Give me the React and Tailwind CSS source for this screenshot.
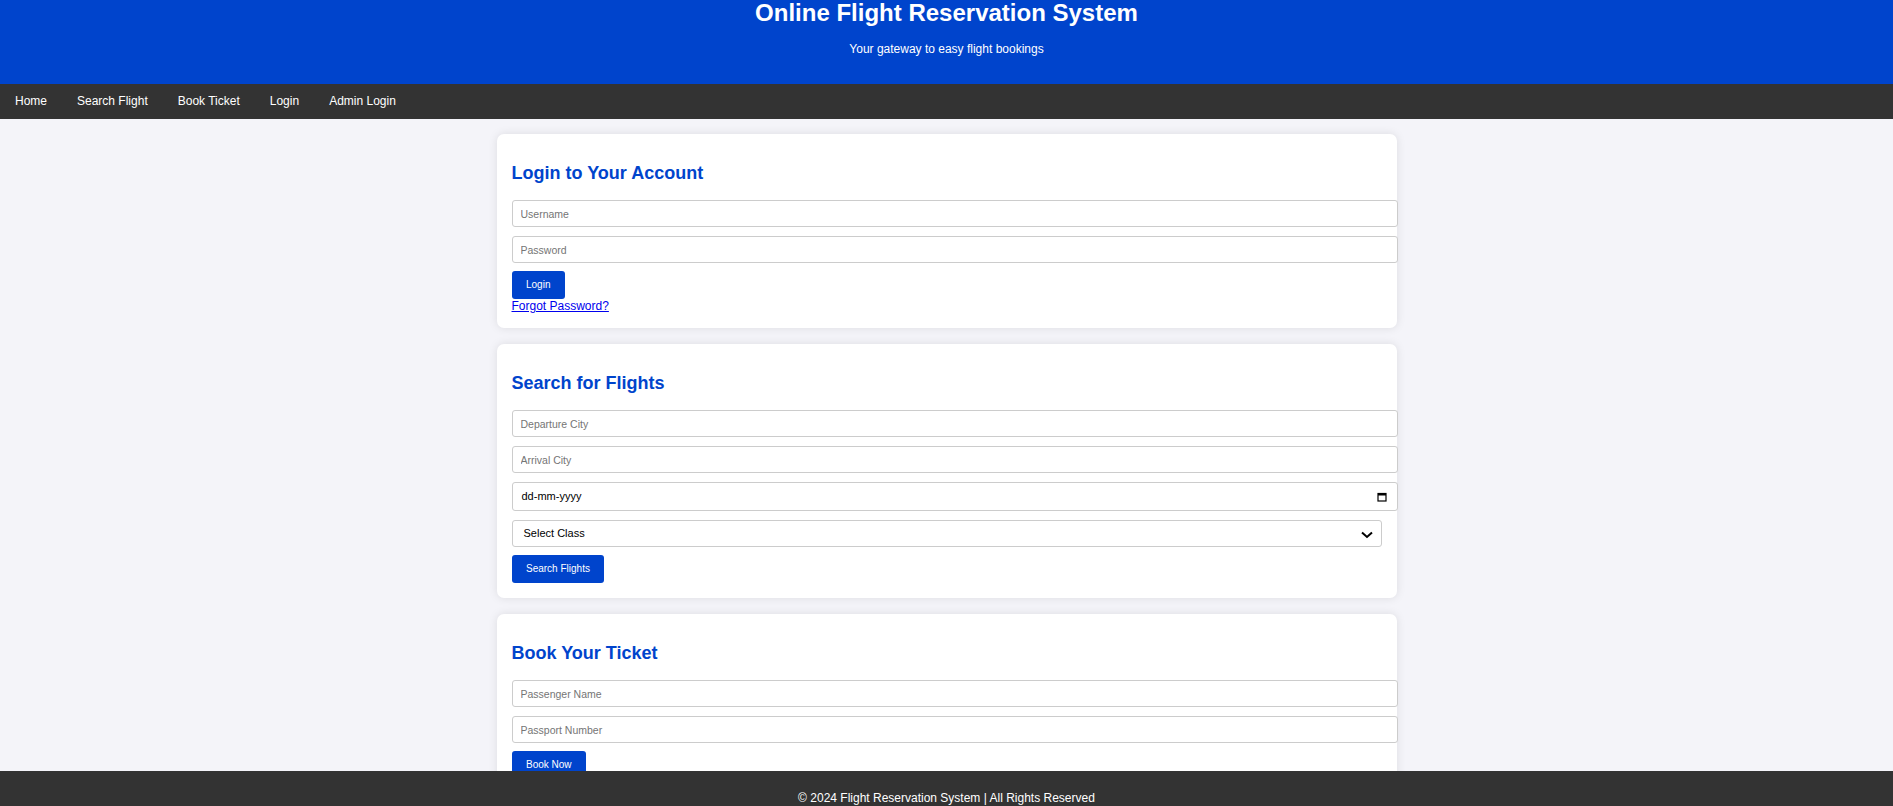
import React from "react";

const font = "font-['Liberation_Sans',Arial,sans-serif]";

function TextInput({ placeholder }) {
  return (
    <input
      type="text"
      placeholder={placeholder}
      className="block w-[886px] h-[27px] border border-[#cccccc] rounded-[3px] bg-white px-[8px] text-[10.5px] text-black placeholder:text-[#757575] outline-none"
    />
  );
}

function Button({ children }) {
  return (
    <button className="inline-block h-[28px] px-[14.5px] bg-[#0044cc] text-white text-[10px] rounded-[3px] leading-[28px]">
      {children}
    </button>
  );
}

function Card({ title, children }) {
  return (
    <section className="bg-white rounded-[7px] shadow-[0_0_10px_rgba(0,0,0,0.1)] px-[15px] pt-[29px] pb-[15px]">
      <h2 className="text-[18px] font-bold leading-[21px] text-[#0044cc]">{title}</h2>
      <div className="mt-[16px] flex flex-col gap-[9px]">{children}</div>
    </section>
  );
}

export default function App() {
  return (
    <div className={`min-h-screen bg-[#f4f4f9] ${font}`}>
      <header className="bg-[#0044cc] h-[84px] text-white text-center">
        <h1 className="text-[24px] font-bold leading-[26px]">Online Flight Reservation System</h1>
        <p className="mt-[16px] text-[12px] leading-[14px]">Your gateway to easy flight bookings</p>
      </header>
      <nav className="bg-[#333333] h-[35px] flex items-center">
        {["Home", "Search Flight", "Book Ticket", "Login", "Admin Login"].map((l) => (
          <a key={l} href="#" className="px-[15px] text-white text-[12px] leading-[15px]">
            {l}
          </a>
        ))}
      </nav>
      <main className="w-[900px] mx-auto pt-[15px] pb-[60px] flex flex-col gap-[16px]">
        <Card title="Login to Your Account">
          <TextInput placeholder="Username" />
          <TextInput placeholder="Password" />
          <div className="mt-[-1px]">
            <Button>Login</Button>
            <a href="#" className="block text-[12px] leading-[14px] text-[#0000ee] underline">
              Forgot Password?
            </a>
          </div>
        </Card>
        <Card title="Search for Flights">
          <TextInput placeholder="Departure City" />
          <TextInput placeholder="Arrival City" />
          <div className="w-[886px] h-[29px] border border-[#cccccc] rounded-[3px] bg-white pl-[9px] pr-[9px] flex items-center justify-between">
            <span className="text-[11px] text-black">dd-mm-yyyy</span>
            <svg width="10" height="10" viewBox="0 0 10 10" className="mr-[1px]">
              <rect x="1" y="1.5" width="8" height="7.5" fill="none" stroke="#000" strokeWidth="1.2" />
              <rect x="1" y="1.5" width="8" height="2" fill="#000" />
            </svg>
          </div>
          <div className="relative w-[870px] h-[27px] border border-[#cccccc] rounded-[3px] bg-white flex items-center pl-[11px]">
            <span className="text-[11px] text-black">Select Class</span>
            <svg width="12" height="8" viewBox="0 0 12 8" className="absolute right-[8px] top-[10px]">
              <path d="M1 1.5 L6 6 L11 1.5" fill="none" stroke="#000" strokeWidth="2" />
            </svg>
          </div>
          <div className="mt-[-1px]">
            <Button>Search Flights</Button>
          </div>
        </Card>
        <Card title="Book Your Ticket">
          <TextInput placeholder="Passenger Name" />
          <TextInput placeholder="Passport Number" />
          <div className="mt-[-1px]">
            <Button>Book Now</Button>
          </div>
        </Card>
      </main>
      <footer className="fixed bottom-0 left-0 right-0 h-[35px] bg-[#333333] text-white text-center overflow-hidden">
        <p className="pt-[20px] text-[12px] leading-[14px]">© 2024 Flight Reservation System | All Rights Reserved</p>
      </footer>
    </div>
  );
}
